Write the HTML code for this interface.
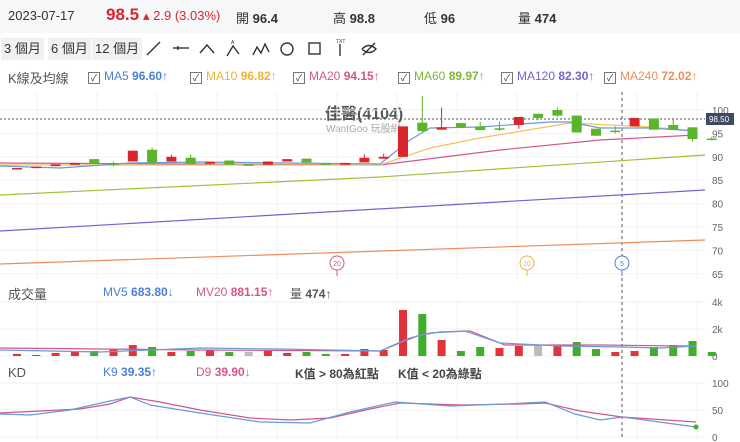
<!DOCTYPE html><html><head><meta charset="utf-8"><style>
body{margin:0;width:740px;height:442px;overflow:hidden;background:#fff;font-family:"Liberation Sans","Noto Sans CJK TC",sans-serif;position:relative}
.a{position:absolute;white-space:nowrap}
#hd{position:absolute;left:0;top:0;width:740px;height:33px;background:#f6f7f9}
.btn{position:absolute;top:38px;height:22px;background:#f0f1f3;font-size:13px;line-height:22px;padding:0 3px;color:#333}
.cb{display:inline-block;width:10px;height:10px;border:1px solid #777;vertical-align:-1px;margin-right:4px;font-size:9px;line-height:10px;text-align:center;color:#333}
.ma{font-size:12px;top:69px}
</style></head><body>
<div id="hd"></div>
<div class="a" style="left:8px;top:8px;font-size:13px;color:#333">2023-07-17</div>
<div class="a" style="left:106px;top:5px;font-size:17px;font-weight:bold;color:#d9262c">98.5</div>
<div class="a" style="left:143px;top:8px;font-size:13px;color:#d9262c">▴ 2.9 (3.03%)</div>
<div class="a" style="left:236px;top:8px;font-size:13px;color:#333">開 <b>96.4</b></div>
<div class="a" style="left:333px;top:8px;font-size:13px;color:#333">高 <b>98.8</b></div>
<div class="a" style="left:424px;top:8px;font-size:13px;color:#333">低 <b>96</b></div>
<div class="a" style="left:518px;top:8px;font-size:13px;color:#333">量 <b>474</b></div>
<div class="btn" style="left:1px">3 個月</div><div class="btn" style="left:48px">6 個月</div><div class="btn" style="left:92px">12 個月</div>
<svg class="a" style="left:140px;top:38px" width="250" height="22" fill="none" stroke="#333" stroke-width="1.4">
<line x1="7" y1="17" x2="20" y2="4"/><line x1="33" y1="10" x2="49" y2="10"/><line x1="38" y1="8" x2="38" y2="12"/>
<polyline points="60,15 67,7 74,15"/><polyline points="87,18 93,8 99,16" /><text x="91" y="6" font-size="5" stroke="none" fill="#333">A</text>
<polyline points="113,17 117,9 121,15 125,6 129,14"/>
<circle cx="147" cy="11" r="6"/><rect x="169" y="5" width="11" height="11"/>
<line x1="200" y1="6" x2="200" y2="18"/><text x="196" y="5" font-size="5" stroke="none" fill="#333">TXT</text>
<path d="M222 11 q7-7 14 0 q-7 7-14 0 M223 17 L235 5"/>
</svg>
<div class="a ma" style="left:8px;color:#555;font-size:13px;top:68px">K線及均線</div>
<div class="a ma" style="left:88px;color:#4a7fd6"><span class="cb">✓</span>MA5 <b>96.60</b>↑</div>
<div class="a ma" style="left:190px;color:#f0b23a"><span class="cb">✓</span>MA10 <b>96.82</b>↑</div>
<div class="a ma" style="left:293px;color:#d0578a"><span class="cb">✓</span>MA20 <b>94.15</b>↑</div>
<div class="a ma" style="left:398px;color:#7fb43a"><span class="cb">✓</span>MA60 <b>89.97</b>↑</div>
<div class="a ma" style="left:501px;color:#7a5fcf"><span class="cb">✓</span>MA120 <b>82.30</b>↑</div>
<div class="a ma" style="left:604px;color:#ef8d5a"><span class="cb">✓</span>MA240 <b>72.02</b>↑</div>
<div class="a" style="left:8px;top:284px;font-size:13px;color:#555">成交量</div>
<div class="a" style="left:103px;top:285px;font-size:12px;color:#4a7fd6">MV5 <b>683.80</b>↓</div>
<div class="a" style="left:196px;top:285px;font-size:12px;color:#d0578a">MV20 <b>881.15</b>↑</div>
<div class="a" style="left:290px;top:285px;font-size:12px;color:#555">量 <b>474</b>↑</div>
<div class="a" style="left:8px;top:365px;font-size:13px;color:#555">KD</div>
<div class="a" style="left:103px;top:365px;font-size:12px;color:#4a7fd6">K9 <b>39.35</b>↑</div>
<div class="a" style="left:196px;top:365px;font-size:12px;color:#d0578a">D9 <b>39.90</b>↓</div>
<div class="a" style="left:295px;top:365px;font-size:12px;color:#444;font-weight:bold">K值 &gt; 80為紅點</div>
<div class="a" style="left:398px;top:365px;font-size:12px;color:#444;font-weight:bold">K值 &lt; 20為綠點</div>
<div class="a" style="left:325px;top:100px;font-size:16px;color:#555;font-weight:bold">佳醫(4104)</div>
<div class="a" style="left:326px;top:120px;font-size:10px;color:#aaa">WantGoo 玩股網</div>
<svg id="c" class="a" style="left:0;top:0" width="740" height="442"></svg>
<script>
var s='',X=i=>17+i*19.3,P=p=>110+(100-p)*4.68;
// grid
for(var gx=37;gx<700;gx+=60){s+=`<line x1="${gx}" y1="92" x2="${gx}" y2="280" stroke="#f0f0f0"/><line x1="${gx}" y1="300" x2="${gx}" y2="358" stroke="#f0f0f0"/><line x1="${gx}" y1="382" x2="${gx}" y2="440" stroke="#f0f0f0"/>`}
[100,95,90,85,80,75,70,65].forEach(p=>{s+=`<line x1="0" y1="${P(p)}" x2="705" y2="${P(p)}" stroke="#f2f2f2"/><text x="712" y="${P(p)+4}" font-size="10" fill="#666">${p}</text>`});
[[302,'4k'],[329,'2k'],[356,'0']].forEach(a=>{s+=`<line x1="0" y1="${a[0]}" x2="705" y2="${a[0]}" stroke="#f2f2f2"/><text x="712" y="${a[0]+4}" font-size="10" fill="#666">${a[1]}</text>`});
[[383,'100'],[410,'50'],[437,'0']].forEach(a=>{s+=`<line x1="0" y1="${a[0]}" x2="705" y2="${a[0]}" stroke="#f2f2f2"/><text x="712" y="${a[0]+4}" font-size="10" fill="#666">${a[1]}</text>`});
s+=`<line x1="0" y1="119" x2="705" y2="119" stroke="#555" stroke-dasharray="2,2"/><rect x="706" y="113" width="28" height="12" fill="#3e4a63"/><text x="709" y="122" font-size="8" fill="#fff">98.50</text>`;
s+=`<line x1="622" y1="92" x2="622" y2="440" stroke="#555" stroke-dasharray="3,3"/>`;
// MA lines
function L(pts,c){s+=`<polyline fill="none" stroke="${c}" stroke-width="1.2" points="${pts.map(p=>p.join(',')).join(' ')}"/>`}
L([[0,264],[705,240]],'#ef8d5a');L([[0,231],[705,190]],'#7a5fcf');L([[0,195],[380,177],[705,155]],'#9cc43a');
L([[0,163],[380,165],[500,150],[600,140],[696,135]],'#d0578a');
L([[0,165],[380,165],[430,148],[480,138],[570,123],[650,127],[696,131]],'#f0c35a');
L([[0,166],[60,168],[130,163],[200,162],[380,164],[410,140],[430,128],[480,127],[550,122],[570,122],[600,128],[650,128],[696,131]],'#6a9ad8');
var C=[[87.3,87.6],[87.6,87.9],[88,88.4],[88.3,88.7],[89.5,88.5,'g'],[88.6,88.4,'g',89,88],[89,91.3],[91.5,88.8,'g',92,88.5],[89,90,'r',90.5,89],[89.8,88.5,'g',90.5,88.5],[88.7,88.9,'r',89,88.3],[89.2,88.3,'g'],[88.4,88.2,'g'],[88.3,89],[89,89.5],[89.6,88.8,'g'],[88.6,88.4,'g'],[88.3,88.7],[88.8,89.8,'r',90.5,88.8],[89.6,90,'r',90.7,89.6],[90,96.5],[97.3,95.5,'g',103,95.3],[95.8,96.3,'r',100.5,95.8],[97.2,96.2,'g'],[96.5,95.7,'g',97.5,95.7],[96.1,95.9,'g',97.5,95.5],[96.8,98.5,'r',98.5,96],[99.2,98.3,'g',99.2,97.8],[100,98.8,'g',100.5,98.5],[98.8,95.2,'g'],[96,94.5,'g'],[95.6,95.4,'g',96.5,95],[96.5,98.3],[98.2,95.8,'g'],[96.8,95.8,'g',98.3,95.8],[96.3,93.8,'g',96.3,93.2],[93.9,93.7,'g',94.3,93.5]];
C.forEach((c,i)=>{var o=c[0],cl=c[1],col=c[2]=='g'?'#5ab52a':'#d9262c',h=c[3]||Math.max(o,cl),l=c[4]||Math.min(o,cl),x=X(i);
s+=`<line x1="${x}" y1="${P(h)}" x2="${x}" y2="${P(l)}" stroke="${col}"/><rect x="${x-5}" y="${P(Math.max(o,cl))}" width="10" height="${Math.max(1.5,Math.abs(o-cl)*4.68)}" fill="${col}"/>`});
var V=[[354,'r'],[355,'r'],[353,'r'],[352,'r'],[351,'g'],[349,'r'],[345,'r'],[347,'g'],[352,'r'],[351,'g'],[350,'r'],[352,'g'],[352,'k'],[351,'r'],[353,'r'],[352,'g'],[354,'g'],[354,'r'],[349,'r'],[350,'r'],[310,'r'],[314,'g'],[340,'r'],[351,'g'],[347,'g'],[348,'r'],[346,'r'],[345,'k'],[346,'r'],[342,'g'],[349,'g'],[352,'r'],[351,'r'],[347,'g'],[345,'g'],[341,'g'],[352,'g']];
V.forEach((v,i)=>{var c={r:'#e0333a',g:'#3fae2a',k:'#bbb'}[v[1]];s+=`<rect x="${X(i)-4}" y="${v[0]}" width="8" height="${356-v[0]}" fill="${c}"/>`});
L([[0,348],[100,349],[200,350],[380,351],[420,335],[440,332],[470,331],[505,345],[600,345],[680,346],[696,346]],'#d0578a');
L([[0,350],[100,352],[200,348],[280,349],[380,351],[410,338],[430,333],[465,331],[500,343],[560,346],[620,347],[660,348],[696,346]],'#6a9ad8');
L([[0,413],[40,411],[80,409],[110,404],[130,397],[160,402],[200,410],[250,418],[290,420],[330,418],[370,409],[400,403],[460,405],[520,404],[545,403],[580,411],[622,417],[696,422]],'#d0578a');
L([[0,414],[30,415],[70,410],[110,401],[130,397],[150,405],[200,413],[260,422],[310,423],[350,412],[395,402],[450,406],[505,404],[545,402],[575,414],[600,420],[622,417],[696,427]],'#6a9ad8');
s+=`<circle cx="696" cy="427" r="2.5" fill="#3fae2a"/>`;
[[337,'20','#d0578a'],[527,'10','#f0b23a'],[622,'5','#4a7fd6']].forEach(m=>{s+=`<circle cx="${m[0]}" cy="263" r="7" fill="#fff" stroke="${m[2]}"/><text x="${m[0]}" y="266" font-size="7" text-anchor="middle" fill="${m[2]}">${m[1]}</text><line x1="${m[0]}" y1="270" x2="${m[0]}" y2="276" stroke="${m[2]}"/>`});
document.getElementById('c').innerHTML=s;
</script>
</body></html>
